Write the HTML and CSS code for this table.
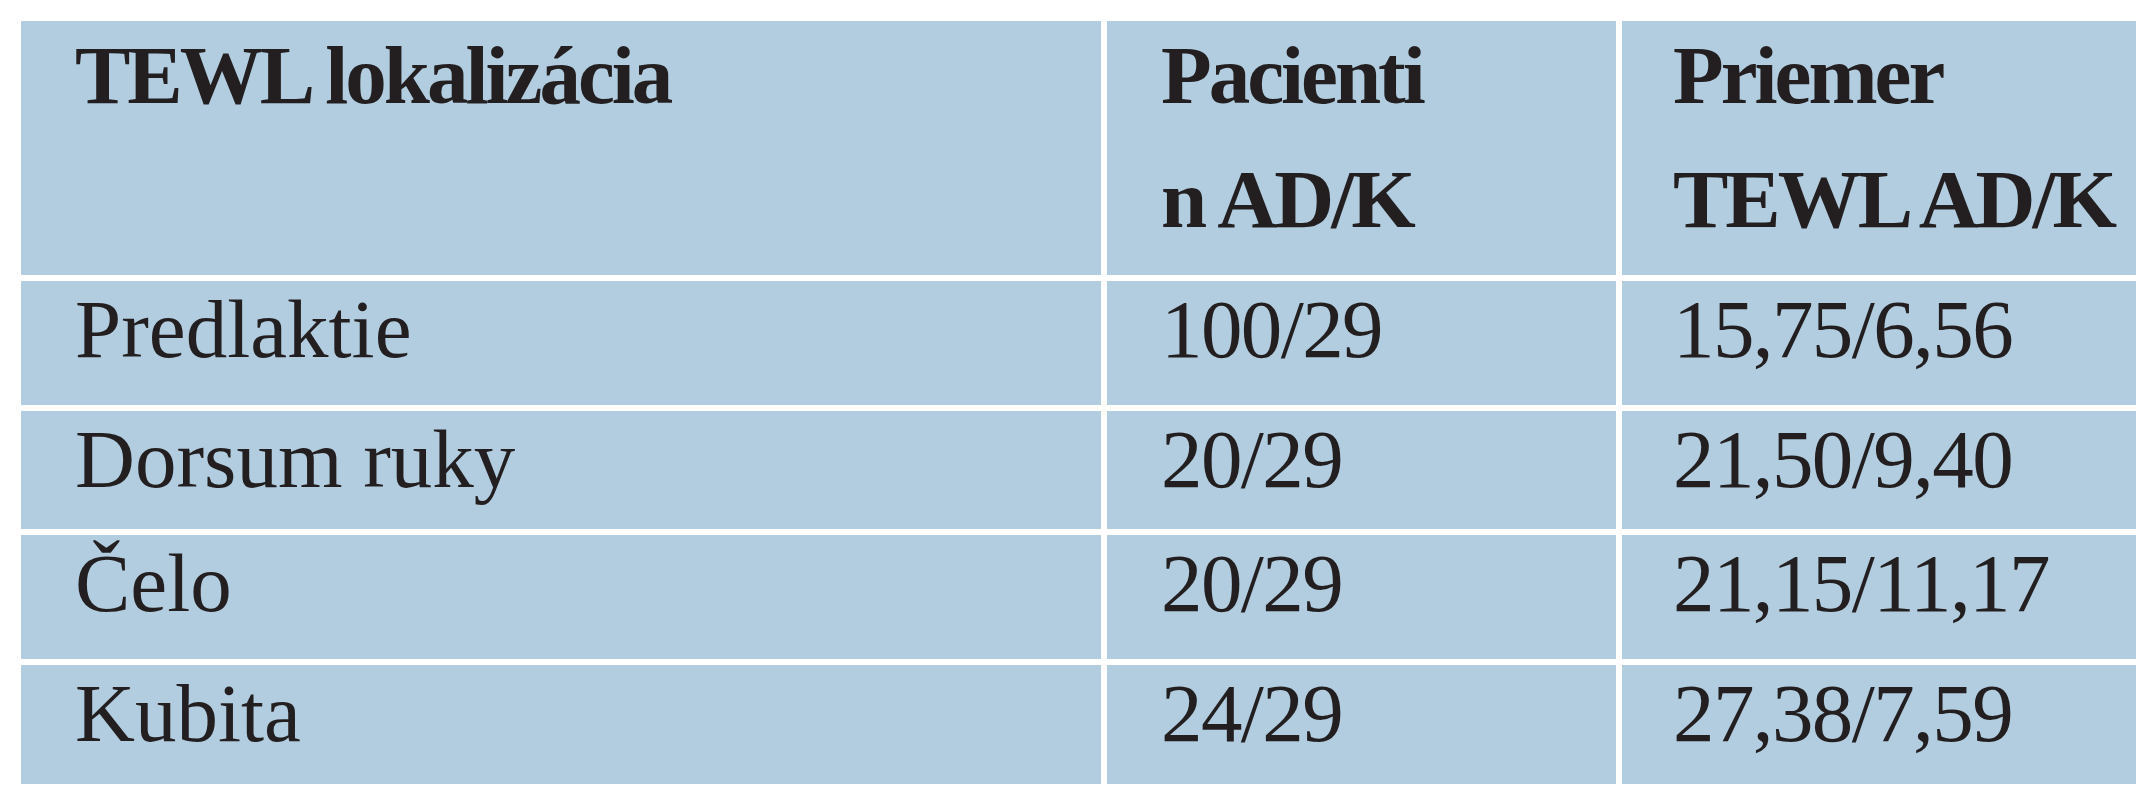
FILE: index.html
```html
<!DOCTYPE html>
<html lang="sk">
<head>
<meta charset="utf-8">
<title>TEWL</title>
<link rel="stylesheet" href="styles.css">
</head>
<body>
<div class="table">
  <div class="cell head c1"><div class="line">TEWL lokalizácia</div></div>
  <div class="cell head c2"><div class="line">Pacienti</div><div class="line">n AD/K</div></div>
  <div class="cell head c3"><div class="line">Priemer</div><div class="line">TEWL AD/K</div></div>

  <div class="cell c1">Predlaktie</div>
  <div class="cell c2 num">100/29</div>
  <div class="cell c3 num">15,75/6,56</div>

  <div class="cell c1">Dorsum ruky</div>
  <div class="cell c2 num">20/29</div>
  <div class="cell c3 num">21,50/9,40</div>

  <div class="cell c1">Čelo</div>
  <div class="cell c2 num">20/29</div>
  <div class="cell c3 num">21,15/11,17</div>

  <div class="cell c1">Kubita</div>
  <div class="cell c2 num">24/29</div>
  <div class="cell c3 num">27,38/7,59</div>
</div>
</body>
</html>
```

FILE: styles.css
```css
html, body {
  margin: 0;
  background: #ffffff;
}
body {
  padding: 21px;
  font-family: "Liberation Serif", "Times New Roman", serif;
  color: #231f20;
}
.table {
  display: grid;
  grid-template-columns: 1080px 509px 514px;
  grid-template-rows: 254px 124px 118px 124px 119px;
  column-gap: 6px;
  row-gap: 6px;
}
.cell {
  background: #b1cddf;
  font-size: 83px;
  line-height: 96px;
  white-space: nowrap;
}
.c1 { padding-left: 54px; }
.c2 { padding-left: 54px; }
.c3 { padding-left: 51px; }
.head {
  display: flex;
  flex-direction: column;
  gap: 16px;
  font-weight: bold;
  letter-spacing: -3px;
}
.head .line {
  line-height: 108px;
}
.num {
  letter-spacing: -1.6px;
}
```
